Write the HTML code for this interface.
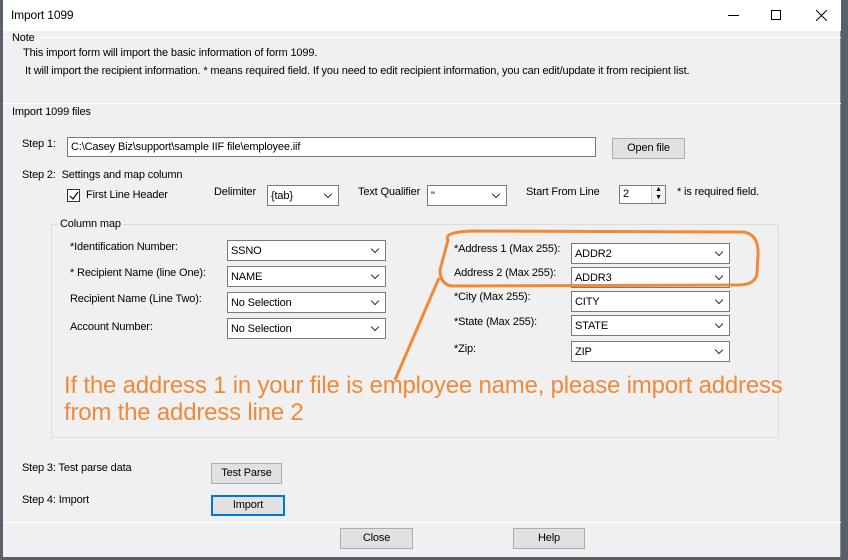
<!DOCTYPE html>
<html><head><style>
*{box-sizing:border-box;margin:0;padding:0}
body{width:848px;height:560px;background:#5a6068;position:relative;overflow:hidden;font-family:"Liberation Sans",sans-serif;font-size:11px;letter-spacing:-0.15px;color:#000}
#win{position:absolute;left:3px;top:0;width:838px;height:557px;background:#f0f0f0;border-right:1px solid #888}
.a{position:absolute;white-space:nowrap}
.hl{position:absolute;height:1px;background:#d5d5d5;border-bottom:1px solid #fff}
.inp{position:absolute;background:#fff;border:1px solid #7a7a7a;padding:3px 3px;font-size:11px}
.sel{position:absolute;background:#fff;border:1px solid #7a7a7a;padding:4px 3px;font-size:11px}
.sel:after{content:"";position:absolute;right:7px;top:5px;width:5px;height:5px;border-right:1px solid #333;border-bottom:1px solid #333;transform:rotate(45deg)}
.btn{position:absolute;background:#e1e1e1;border:1px solid #adadad;text-align:center;font-size:11px;line-height:19px}
</style></head><body>
<div id="win">
<div style="position:absolute;left:0;top:0;width:838px;height:31px;background:#fff"></div>
<div class="a" style="left:8px;top:8px;font-size:12px">Import 1099</div>
<div style="position:absolute;left:725px;top:15px;width:11px;height:1px;background:#000"></div>
<div style="position:absolute;left:768px;top:10px;width:10px;height:10px;border:1px solid #000"></div>
<svg style="position:absolute;left:813px;top:10px" width="11" height="11"><path d="M0 0L11 11M11 0L0 11" stroke="#000" stroke-width="1"/></svg>

<div class="hl" style="left:0;top:37px;width:838px"></div>
<div class="a" style="left:7px;top:32px;background:#f0f0f0;padding:0 2px">Note</div>
<div class="a" style="left:20px;top:47px">This import form will import the basic information of form 1099.</div>
<div class="a" style="left:22px;top:65px">It will import the recipient information. * means required field. If you need to edit recipient information, you can edit/update it from recipient list.</div>
<div class="hl" style="left:0;top:103px;width:838px"></div>
<div class="a" style="left:7px;top:106px;background:#f0f0f0;padding:0 2px">Import 1099 files</div>

<div class="a" style="left:19px;top:138px">Step 1:</div>
<div class="inp" style="left:64px;top:137px;width:529px;height:20px">C:\Casey Biz\support\sample IIF file\employee.iif</div>
<div class="btn" style="left:609px;top:138px;width:73px;height:21px">Open file</div>

<div class="a" style="left:19px;top:169px">Step 2:&nbsp; Settings and map column</div>
<div style="position:absolute;left:64px;top:189px;width:13px;height:13px;border:1px solid #333;background:#fff"></div>
<svg style="position:absolute;left:66px;top:191px" width="10" height="10"><path d="M1 5L4 8L9 1" fill="none" stroke="#000" stroke-width="1.2"/></svg>
<div class="a" style="left:83px;top:189px">First Line Header</div>
<div class="a" style="left:211px;top:186px">Delimiter</div>
<div class="sel" style="left:264px;top:185px;width:72px;height:21px">{tab}</div>
<div class="a" style="left:355px;top:186px">Text Qualifier</div>
<div class="sel" style="left:424px;top:185px;width:80px;height:21px">"</div>
<div class="a" style="left:523px;top:186px">Start From Line</div>
<div class="inp" style="left:616px;top:185px;width:47px;height:19px;padding:2px 3px">2</div>
<div style="position:absolute;left:648px;top:186px;width:14px;height:17px;border-left:1px solid #ccc;background:#f3f3f3;font-size:7px;line-height:8px;text-align:center">▲<br>▼</div>
<div class="a" style="left:674px;top:186px">* is required field.</div>

<div style="position:absolute;left:48px;top:224px;width:728px;height:214px;border:1px solid #dcdcdc"></div>
<div class="a" style="left:55px;top:218px;background:#f0f0f0;padding:0 2px">Column map</div>

<div class="a" style="left:67px;top:241px">*Identification Number:</div>
<div class="a" style="left:67px;top:267px">* Recipient Name (line One):</div>
<div class="a" style="left:67px;top:293px">Recipient Name (Line Two):</div>
<div class="a" style="left:67px;top:321px">Account Number:</div>
<div class="sel" style="left:224px;top:240px;width:159px;height:21px">SSNO</div>
<div class="sel" style="left:224px;top:266px;width:159px;height:21px">NAME</div>
<div class="sel" style="left:224px;top:292px;width:159px;height:21px">No Selection</div>
<div class="sel" style="left:224px;top:318px;width:159px;height:21px">No Selection</div>

<div class="a" style="left:451px;top:243px">*Address 1 (Max 255):</div>
<div class="a" style="left:451px;top:267px">Address 2 (Max 255):</div>
<div class="a" style="left:451px;top:291px">*City (Max 255):</div>
<div class="a" style="left:451px;top:316px">*State (Max 255):</div>
<div class="a" style="left:451px;top:343px">*Zip:</div>
<div class="sel" style="left:568px;top:243px;width:159px;height:21px">ADDR2</div>
<div class="sel" style="left:568px;top:267px;width:159px;height:21px">ADDR3</div>
<div class="sel" style="left:568px;top:291px;width:159px;height:21px">CITY</div>
<div class="sel" style="left:568px;top:315px;width:159px;height:21px">STATE</div>
<div class="sel" style="left:568px;top:341px;width:159px;height:21px">ZIP</div>

<svg style="position:absolute;left:0;top:0" width="838" height="557">
<path d="M445 240 Q440 232 470 231 L740 232 Q756 234 755 255 L754 274 Q752 285 735 285 L450 286 Q437 285 437 270 Z" fill="none" stroke="#f08a34" stroke-width="3"/>
<path d="M436 278 L392 380" fill="none" stroke="#f08a34" stroke-width="3"/>
</svg>
<div class="a" style="left:61px;top:372px;font-size:24px;letter-spacing:-0.2px;color:#ef8a3c;line-height:27px">If the address 1 in your file is employee name, please import address<br>from the address line 2</div>

<div class="a" style="left:19px;top:462px">Step 3: Test parse data</div>
<div class="btn" style="left:208px;top:463px;width:71px;height:21px">Test Parse</div>
<div class="a" style="left:19px;top:494px">Step 4: Import</div>
<div class="btn" style="left:208px;top:495px;width:74px;height:21px;border:2px solid #0078d7;line-height:17px">Import</div>
<div class="hl" style="left:0;top:522px;width:838px"></div>
<div class="btn" style="left:337px;top:528px;width:73px;height:21px">Close</div>
<div class="btn" style="left:510px;top:528px;width:72px;height:21px">Help</div>
</div>
</body></html>
